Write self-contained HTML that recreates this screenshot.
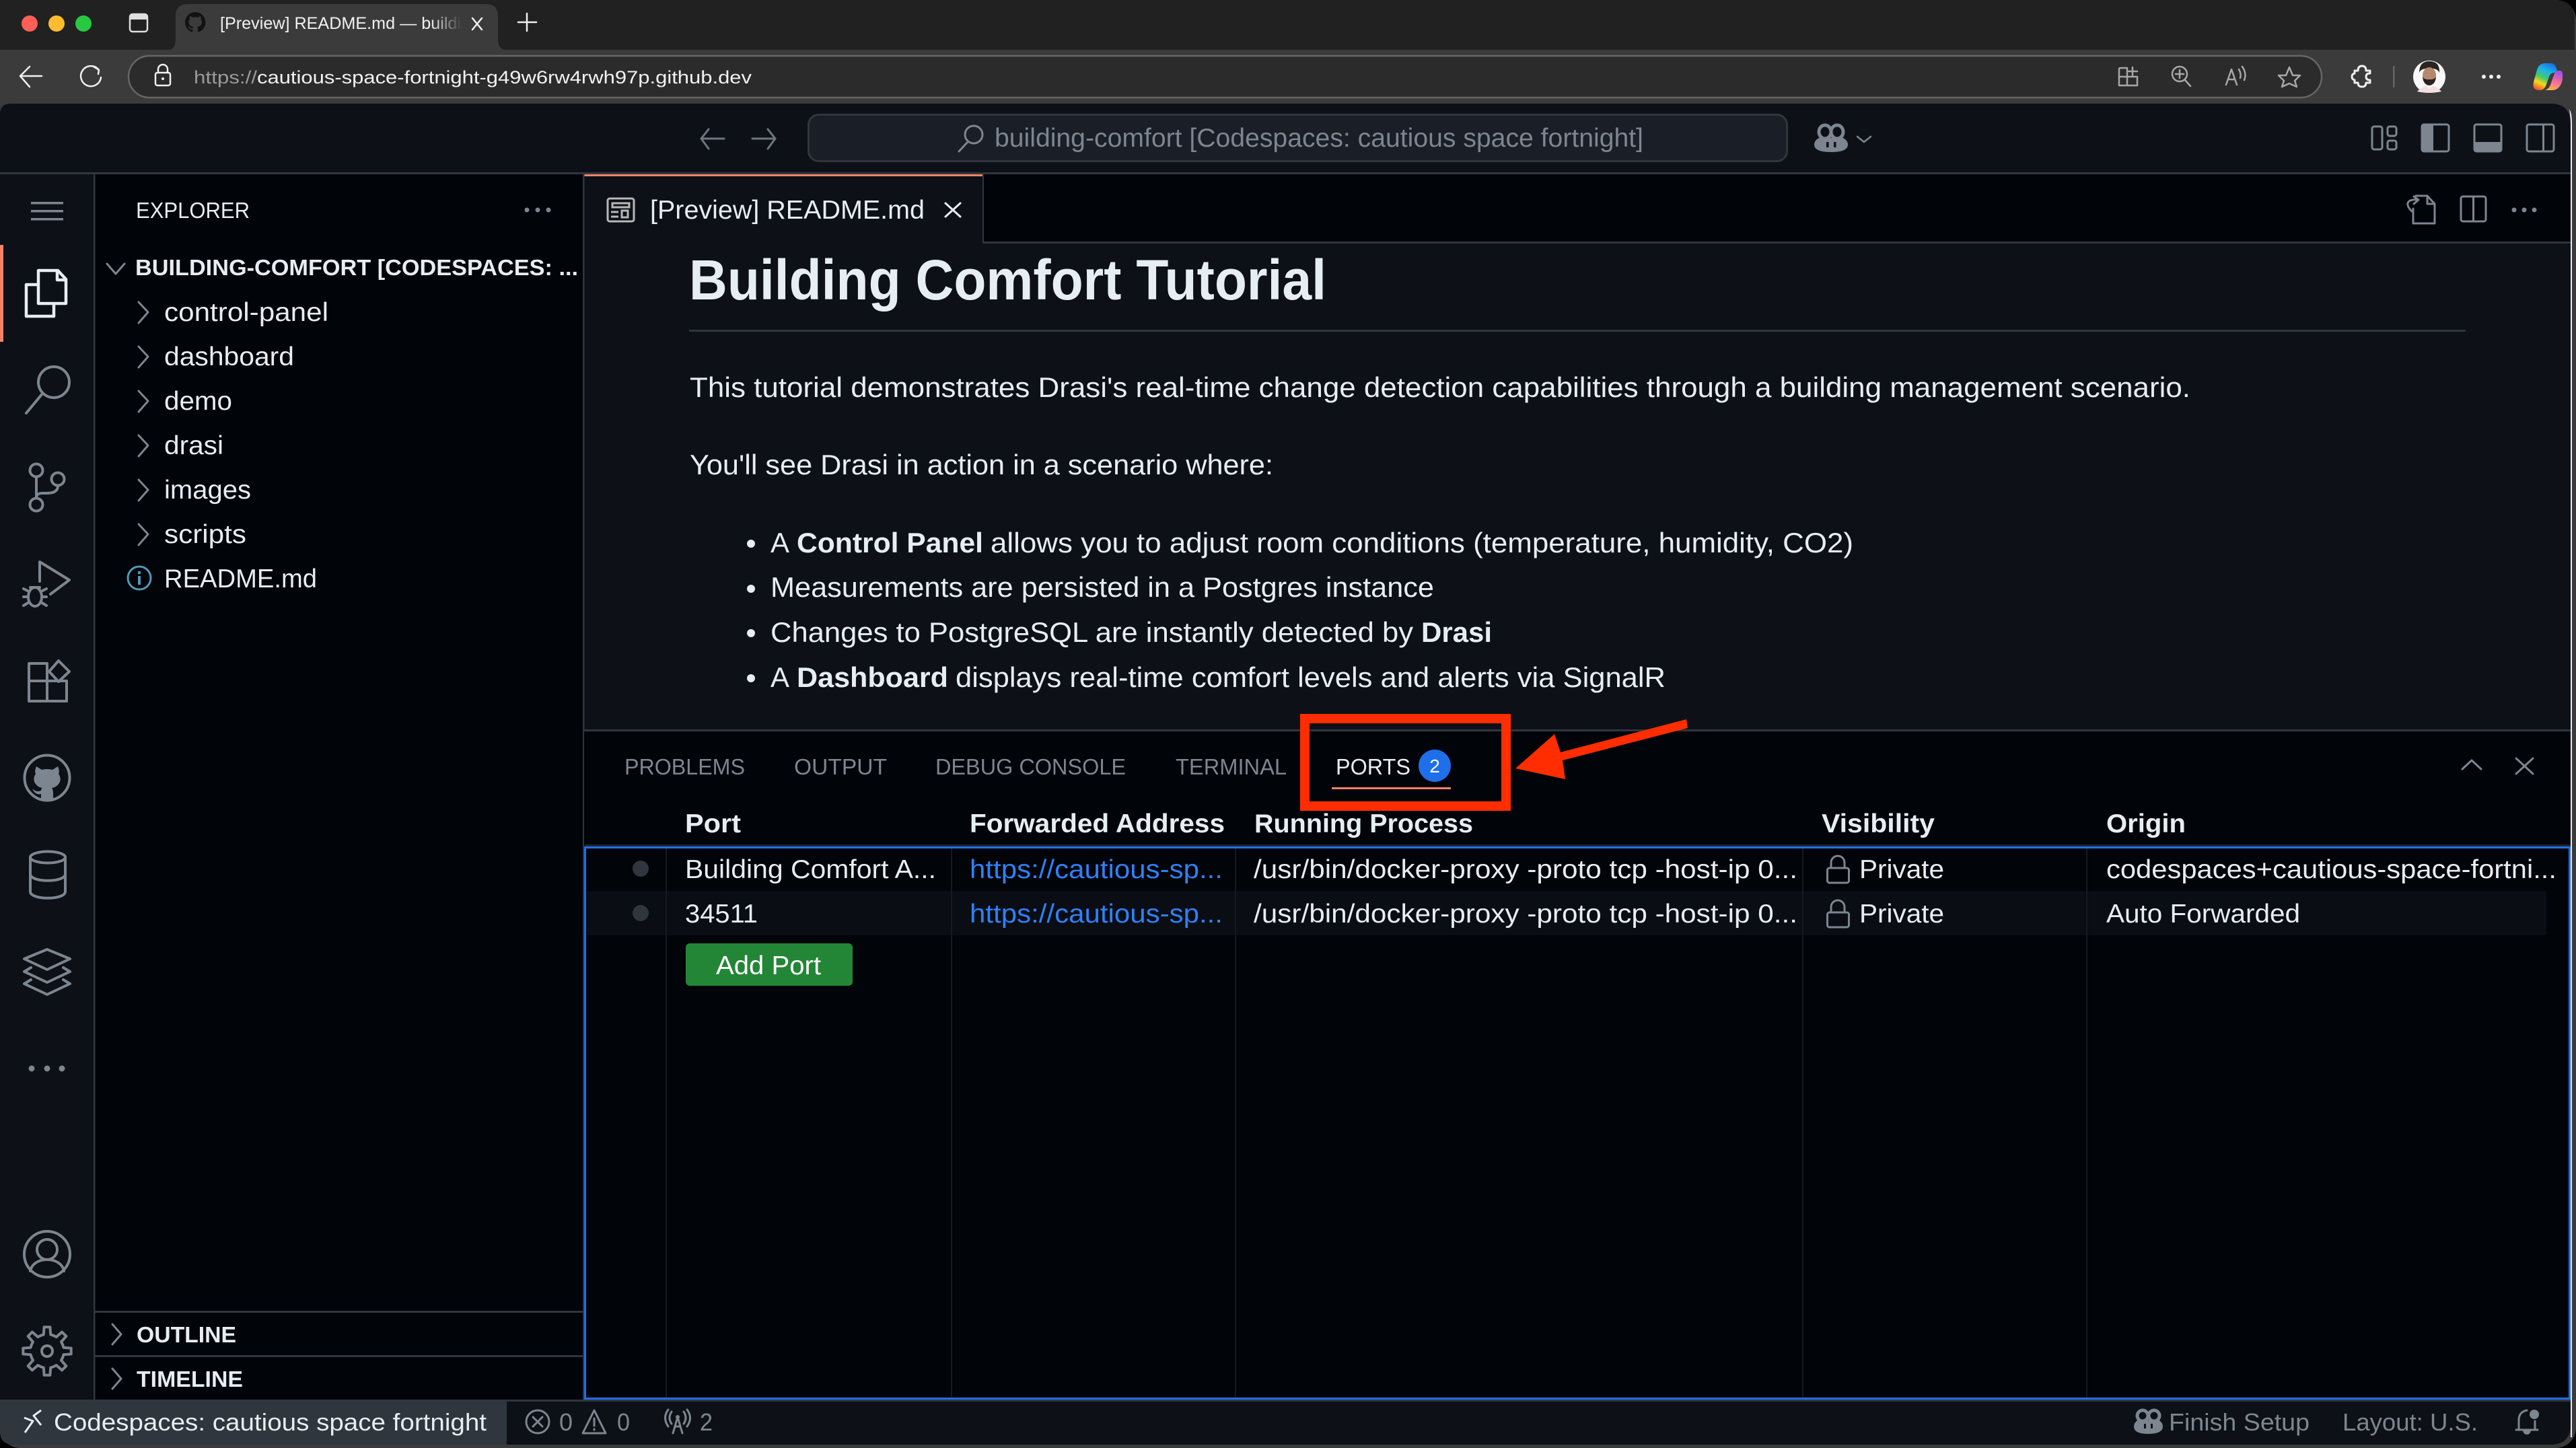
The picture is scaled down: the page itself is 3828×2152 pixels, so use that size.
<!DOCTYPE html>
<html lang="en">
<head>
<meta charset="utf-8">
<title>[Preview] README.md</title>
<style>
html,body{margin:0;padding:0;background:#000;width:3828px;height:2152px;overflow:hidden}
svg{display:block}
text{font-family:"Liberation Sans",sans-serif;white-space:pre}
.b{font-weight:700}
.ic{fill:none;stroke:#7d8590;stroke-width:4;stroke-linejoin:round;stroke-linecap:round}
.sm{fill:none;stroke:#7d8590;stroke-width:3;stroke-linejoin:round;stroke-linecap:round}
.br{fill:none;stroke:#a8a8a8;stroke-width:2.5;stroke-linejoin:round;stroke-linecap:round}
.wh{fill:none;stroke:#f0f0f0;stroke-width:2.5;stroke-linejoin:round;stroke-linecap:round}
</style>
</head>
<body>
<svg xmlns="http://www.w3.org/2000/svg" width="3828" height="2152" viewBox="0 0 3828 2152">
<defs>
<linearGradient id="fade" gradientUnits="userSpaceOnUse" x1="640" y1="0" x2="686" y2="0"><stop offset="0" stop-color="#f0f0f0"/><stop offset="1" stop-color="#f0f0f0" stop-opacity="0"/></linearGradient>
<linearGradient id="cp1" gradientUnits="userSpaceOnUse" x1="3790" y1="94" x2="3772" y2="134"><stop offset="0" stop-color="#1673e6"/><stop offset=".3" stop-color="#1fb5e8"/><stop offset=".55" stop-color="#45c96a"/><stop offset=".75" stop-color="#f4d81e"/><stop offset="1" stop-color="#f4502a"/></linearGradient>
<linearGradient id="cp2" gradientUnits="userSpaceOnUse" x1="3800" y1="105" x2="3790" y2="134"><stop offset="0" stop-color="#a24fe8"/><stop offset=".5" stop-color="#ec6aa4"/><stop offset="1" stop-color="#ffb347"/></linearGradient>
</defs>

<!-- browser chrome -->
<rect x="0" y="0" width="3828" height="2152" rx="30" fill="#3b3b3b"/>
<path d="M0 74V0H3796Q3826 0 3826 30V74Z" fill="#212121"/>
<circle cx="44" cy="35" r="12" fill="#ff5f57"/>
<circle cx="84" cy="35" r="12" fill="#febc2e"/>
<circle cx="124" cy="35" r="12" fill="#28c840"/>
<rect x="193" y="21" width="26" height="26" rx="4" fill="none" stroke="#e0e0e0" stroke-width="2.5"/>
<path d="M193 29V24Q193 21 196 21H216Q219 21 219 24V29Z" fill="#e0e0e0"/>

<path d="M250 74Q261 74 261 58V24Q261 6 279 6H722Q740 6 740 24V58Q740 74 752 74Z" fill="#3b3b3b"/>
<g transform="translate(275,18) scale(1.9)"><path fill="#121212" d="M8 0C3.58 0 0 3.58 0 8c0 3.54 2.29 6.53 5.47 7.59.4.07.55-.17.55-.38 0-.19-.01-.82-.01-1.49-2.01.37-2.53-.49-2.69-.94-.09-.23-.48-.94-.82-1.13-.28-.15-.68-.52-.01-.53.63-.01 1.08.58 1.23.82.72 1.21 1.87.87 2.33.66.07-.52.28-.87.51-1.07-1.78-.2-3.64-.89-3.64-3.95 0-.87.31-1.59.82-2.15-.08-.2-.36-1.02.08-2.12 0 0 .67-.21 2.2.82.64-.18 1.32-.27 2-.27.68 0 1.36.09 2 .27 1.53-1.04 2.2-.82 2.2-.82.44 1.1.16 1.92.08 2.12.51.56.82 1.27.82 2.15 0 3.07-1.87 3.75-3.65 3.95.29.25.54.73.54 1.48 0 1.07-.01 1.93-.01 2.2 0 .21.15.46.55.38A8.013 8.013 0 0016 8c0-4.42-3.58-8-8-8z"/></g>
<text x="327" y="43" font-size="25" fill="url(#fade)" textLength="358" lengthAdjust="spacingAndGlyphs">[Preview] README.md — buildi</text>
<path class="wh" d="M702 27L716 44M716 27L702 44"/>
<path class="wh" d="M783 20V46M770 33H797"/>

<path class="wh" d="M31 113H62M44 99L30 113L44 129"/>
<path class="wh" d="M147 104A15 15 0 1 0 150 115M139 99L147 104L146 110" />
<rect x="191" y="83" width="3259" height="62" rx="31" fill="#2b2b2b" stroke="#666" stroke-width="2.5"/>
<rect x="231" y="108" width="22" height="19" rx="3" fill="none" stroke="#f0f0f0" stroke-width="2.5"/>
<path class="wh" d="M235 108V103A7 7 0 0 1 249 103V108"/>
<circle cx="242" cy="117" r="2" fill="#f0f0f0"/>
<text x="288" y="124" font-size="27" fill="#9a9a9a" textLength="94" lengthAdjust="spacingAndGlyphs">https://</text>
<text x="382" y="124" font-size="27" fill="#f2f2f2" textLength="735" lengthAdjust="spacingAndGlyphs">cautious-space-fortnight-g49w6rw4rwh97p.github.dev</text>

<path class="br" d="M3149 114H3176V127H3149V103Q3149 101 3151 101H3161V127M3161 114V103M3169 100V112M3163 106H3176"/>
<circle cx="3239" cy="110" r="11" class="br"/><path class="br" d="M3247 119L3255 128M3233 110H3245M3239 104V116"/>
<path class="br" d="M3308 126L3316 103L3324 126M3311 118H3321M3327 103Q3331 110 3329 116M3332 99Q3339 109 3335 119"/>
<path class="br" d="M3402 100L3407 112L3418 112L3410 120L3413 129L3402 124L3391 129L3394 120L3386 112L3397 112Z"/>
<path class="wh" style="stroke-width:3" d="M3504 105Q3504 98 3510 98Q3516 98 3516 105H3522V109Q3516 109 3516 114Q3516 119 3522 119V123H3516Q3516 129 3510 129Q3504 129 3504 123H3499V119Q3495 118 3495 114Q3495 110 3499 109V105Z"/>
<rect x="3556" y="98" width="2.5" height="32" fill="#666"/>
<ellipse cx="3610" cy="114" rx="24" ry="24" fill="#f8f8f8"/>
<path d="M3595 108Q3595 91 3610 91Q3626 91 3625 108Q3622 101 3610 102Q3598 101 3595 108Z" fill="#2b2522"/>
<ellipse cx="3610" cy="112" rx="10" ry="12" fill="#b48a6f"/>
<path d="M3600 114Q3601 126 3610 127Q3619 126 3620 114Q3617 119 3610 118Q3603 119 3600 114Z" fill="#2c221d"/>
<path d="M3592 136Q3598 129 3605 128L3610 132L3615 128Q3622 129 3628 136Q3619 138 3610 138Q3601 138 3592 136Z" fill="#f3dfe0"/>
<circle cx="3691" cy="114" r="3" fill="#f0f0f0"/><circle cx="3702" cy="114" r="3" fill="#f0f0f0"/><circle cx="3713" cy="114" r="3" fill="#f0f0f0"/>
<path d="M3771 134Q3763 133 3765 122L3770 104Q3773 94 3782 94H3790Q3797 94 3799 102L3801 108H3796Q3790 108 3788 114L3783 128Q3780 134 3775 134Z" fill="url(#cp1)"/>
<path d="M3782 134Q3788 132 3790 126L3795 112Q3797 105 3803 105H3804Q3808 105 3808 110V118Q3806 128 3800 132Q3797 134 3793 134Z" fill="url(#cp2)"/>

<!-- window -->
<path d="M0 170Q0 154 16 154H3790Q3820 154 3820 184V2117Q3820 2147 3790 2147H20Q0 2147 0 2127Z" fill="#0d1117"/>
<path d="M3820 166Q3822 172 3822 184V2136H3820V184Q3820 176 3818 162Z" fill="#e8e8e8"/>

<!-- title bar -->
<path class="sm" style="stroke:#6e7681" d="M1042 206L1053 192M1042 206L1053 221M1042 206H1076"/>
<path class="sm" style="stroke:#6e7681" d="M1152 206L1141 192M1152 206L1141 221M1152 206H1118"/>
<rect x="1201.5" y="170.5" width="1454" height="69" rx="15" fill="#1a1e26" stroke="#30363d" stroke-width="3"/>
<circle cx="1447" cy="200" r="13" class="sm"/><path class="sm" d="M1438 211L1425 225"/>
<text x="1478" y="218" font-size="39" fill="#7d8590" textLength="964" lengthAdjust="spacingAndGlyphs">building-comfort [Codespaces: cautious space fortnight]</text>
<g fill="none" stroke="#7d8590" stroke-width="5">
<ellipse cx="2712" cy="196" rx="9" ry="10"/><ellipse cx="2730" cy="196" rx="9" ry="10"/>
<path fill="#7d8590" stroke="none" d="M2703 205H2739Q2746 209 2746 215Q2746 226 2721 226Q2696 226 2696 215Q2696 209 2703 205Z"/>
</g>
<rect x="2714" y="211" width="3.5" height="8" fill="#0d1117"/><rect x="2725" y="211" width="3.5" height="8" fill="#0d1117"/>
<path class="sm" d="M2760 203L2770 211L2780 203" style="stroke-width:2.5"/>

<rect x="3525" y="188" width="15" height="34" rx="3" class="sm"/>
<rect x="3548" y="188" width="13" height="14" rx="3" class="sm"/>
<rect x="3548" y="209" width="13" height="13" rx="3" class="sm"/>
<rect x="3599" y="185" width="40" height="40" rx="3" class="sm"/><rect x="3599" y="185" width="17" height="40" rx="2" fill="#7d8590"/>
<rect x="3677" y="185" width="40" height="40" rx="3" class="sm"/><rect x="3677" y="211" width="40" height="15" rx="2" fill="#7d8590"/>
<rect x="3755" y="185" width="40" height="40" rx="3" class="sm"/><rect x="3778" y="185" width="3" height="40" fill="#7d8590"/>
<rect x="0" y="256" width="3820" height="3" fill="#30363d"/>

<!-- activity bar -->
<rect x="139" y="259" width="2.5" height="1821" fill="#30363d"/>
<rect x="46" y="300" width="48" height="3.5" fill="#7d8590"/><rect x="46" y="312" width="48" height="3.5" fill="#7d8590"/><rect x="46" y="324" width="48" height="3.5" fill="#7d8590"/>
<rect x="0" y="364" width="5" height="144" fill="#f78166"/>
<g fill="none" stroke="#e6edf3" stroke-width="4.5" stroke-linejoin="round">
<path d="M57 402H86L98 415V451H57Z"/><path d="M85 402V416H98"/>
<path d="M56 423H39V470H80V453"/>
</g>
<circle cx="80" cy="568" r="23" class="ic"/><path class="ic" d="M63 585L39 614"/>
<circle cx="54" cy="699" r="9.5" class="ic"/><circle cx="54" cy="750" r="9.5" class="ic"/><circle cx="86" cy="712" r="9.5" class="ic"/>
<path class="ic" d="M54 709V740M86 722C86 732 76 733 68 733H62C58 733 54 735 54 740"/>
<path class="ic" d="M59 864V835L103 862L75 883"/>
<ellipse cx="52" cy="887" rx="10" ry="14" class="ic"/><path class="ic" d="M35 875L43 879M35 887H42M35 900L43 895M69 875L61 879M69 887H62M69 900L61 895M45 873H59"/>
<path class="ic" d="M43 986H70V1042H43ZM43 1012H99V1042H70M70 1012V1042"/><path class="ic" d="M99 1012"/>
<path class="ic" d="M73 998L87 982L103 998L87 1013Z"/>
<circle cx="70" cy="1156" r="33.5" class="ic"/>
<path fill="#7d8590" d="M54 1139L62 1144Q70 1142 78 1144L86 1139Q89 1146 87 1150Q91 1156 89 1162Q85 1170 77 1171Q79 1174 79 1178V1190H61V1180Q52 1182 48 1172Q54 1178 61 1175Q61 1172 63 1171Q55 1170 51 1162Q49 1156 53 1150Q51 1146 54 1139Z"/>
<ellipse cx="71" cy="1274" rx="26" ry="8.5" class="ic"/>
<path class="ic" d="M45 1274V1325C45 1338 97 1338 97 1325V1274M45 1299C45 1312 97 1312 97 1299"/>
<path class="ic" d="M70 1411L104 1425L70 1441L36 1425Z"/>
<path class="ic" d="M46 1438L36 1444L70 1460L104 1444L94 1438"/>
<path class="ic" d="M46 1456L36 1462L70 1478L104 1462L94 1456"/>
<circle cx="47" cy="1588" r="4.5" fill="#7d8590"/><circle cx="70" cy="1588" r="4.5" fill="#7d8590"/><circle cx="92" cy="1588" r="4.5" fill="#7d8590"/>
<circle cx="70" cy="1864" r="34" class="ic"/><circle cx="70" cy="1857" r="15" class="ic"/><path class="ic" d="M45 1889C47 1878 58 1872 70 1872C82 1872 93 1878 95 1889"/>
<g transform="translate(70,2008)">
<circle r="8" class="ic"/>
<path class="ic" d="M-9.6 -23.1L-5.2 -24.5L-4.4 -35.7H4.4L5.2 -24.5L9.6 -23.1" transform="rotate(0)"/>
<path class="ic" d="M-9.6 -23.1L-5.2 -24.5L-4.4 -35.7H4.4L5.2 -24.5L9.6 -23.1" transform="rotate(45)"/>
<path class="ic" d="M-9.6 -23.1L-5.2 -24.5L-4.4 -35.7H4.4L5.2 -24.5L9.6 -23.1" transform="rotate(90)"/>
<path class="ic" d="M-9.6 -23.1L-5.2 -24.5L-4.4 -35.7H4.4L5.2 -24.5L9.6 -23.1" transform="rotate(135)"/>
<path class="ic" d="M-9.6 -23.1L-5.2 -24.5L-4.4 -35.7H4.4L5.2 -24.5L9.6 -23.1" transform="rotate(180)"/>
<path class="ic" d="M-9.6 -23.1L-5.2 -24.5L-4.4 -35.7H4.4L5.2 -24.5L9.6 -23.1" transform="rotate(225)"/>
<path class="ic" d="M-9.6 -23.1L-5.2 -24.5L-4.4 -35.7H4.4L5.2 -24.5L9.6 -23.1" transform="rotate(270)"/>
<path class="ic" d="M-9.6 -23.1L-5.2 -24.5L-4.4 -35.7H4.4L5.2 -24.5L9.6 -23.1" transform="rotate(315)"/>
</g>

<!-- sidebar -->
<rect x="141.500" y="259" width="724.5" height="1821" fill="#010409"/>
<rect x="866" y="259" width="2.500" height="1821" fill="#30363d"/>
<text x="202" y="324" font-size="33" fill="#e6edf3" textLength="169" lengthAdjust="spacingAndGlyphs">EXPLORER</text>
<circle cx="783" cy="312" r="3.500" fill="#7d8590"/><circle cx="799" cy="312" r="3.500" fill="#7d8590"/><circle cx="815" cy="312" r="3.500" fill="#7d8590"/>
<path class="sm" d="M159 392L172 407L185 392"/>
<text class="b" x="201" y="409" font-size="33" fill="#e6edf3" textLength="658" lengthAdjust="spacingAndGlyphs">BUILDING-COMFORT [CODESPACES: ...</text>
<path class="sm" d="M206 449L220 464L206 480"/><text x="244" y="477" font-size="39" fill="#e6edf3" textLength="244" lengthAdjust="spacingAndGlyphs">control-panel</text>
<path class="sm" d="M206 515L220 530L206 546"/><text x="244" y="543" font-size="39" fill="#e6edf3" textLength="193" lengthAdjust="spacingAndGlyphs">dashboard</text>
<path class="sm" d="M206 581L220 596L206 612"/><text x="244" y="609" font-size="39" fill="#e6edf3" textLength="101" lengthAdjust="spacingAndGlyphs">demo</text>
<path class="sm" d="M206 647L220 662L206 678"/><text x="244" y="675" font-size="39" fill="#e6edf3" textLength="88" lengthAdjust="spacingAndGlyphs">drasi</text>
<path class="sm" d="M206 713L220 728L206 744"/><text x="244" y="741" font-size="39" fill="#e6edf3" textLength="129" lengthAdjust="spacingAndGlyphs">images</text>
<path class="sm" d="M206 779L220 794L206 810"/><text x="244" y="807" font-size="39" fill="#e6edf3" textLength="122" lengthAdjust="spacingAndGlyphs">scripts</text>
<circle cx="207" cy="859" r="17" fill="none" stroke="#519aba" stroke-width="3"/><rect x="205" y="856" width="4" height="13" fill="#519aba"/><rect x="205" y="849" width="4" height="4" fill="#519aba"/>
<text x="244" y="873" font-size="39" fill="#e6edf3" textLength="227" lengthAdjust="spacingAndGlyphs">README.md</text>
<rect x="141" y="1948" width="725" height="3" fill="#30363d"/>
<rect x="141" y="2014" width="725" height="3" fill="#30363d"/>
<path class="sm" d="M167 1968L180 1983L167 1998"/><text class="b" x="203" y="1995" font-size="33" fill="#e6edf3" textLength="148" lengthAdjust="spacingAndGlyphs">OUTLINE</text>
<path class="sm" d="M167 2034L180 2049L167 2064"/><text class="b" x="203" y="2061" font-size="33" fill="#e6edf3" textLength="158" lengthAdjust="spacingAndGlyphs">TIMELINE</text>

<!-- editor tabs -->
<rect x="868.500" y="259" width="2951.500" height="103" fill="#010409"/>
<rect x="868.500" y="359" width="2951.500" height="3" fill="#30363d"/>
<rect x="868.500" y="259" width="591.500" height="103" fill="#0d1117"/>
<rect x="868.500" y="259" width="591.500" height="3" fill="#f78166"/>
<rect x="1460" y="259" width="2" height="100" fill="#30363d"/>
<g fill="none" stroke="#b8b8b8" stroke-width="3">
<rect x="903" y="295" width="39" height="34" rx="3"/>
<rect x="910" y="302" width="25" height="6"/>
<rect x="924" y="313" width="9" height="10"/>
<path d="M908 315H919M908 322H919"/>
</g>
<text x="966" y="325" font-size="39" fill="#e6edf3" textLength="408" lengthAdjust="spacingAndGlyphs">[Preview] README.md</text>
<path fill="none" stroke="#e6edf3" stroke-width="3" stroke-linecap="round" d="M1405 302L1427 322M1427 302L1405 322"/>
<path class="sm" d="M3590 291H3607L3618 303V332H3586V310M3607 291V303H3618M3584 314Q3574 304 3580 299Q3584 296 3593 297M3587 292L3594 297L3587 303"/>
<rect x="3657" y="292" width="37" height="37" rx="3" class="sm"/><rect x="3674" y="292" width="3" height="37" fill="#7d8590"/>
<circle cx="3736" cy="312" r="3.500" fill="#7d8590"/><circle cx="3751" cy="312" r="3.500" fill="#7d8590"/><circle cx="3766" cy="312" r="3.500" fill="#7d8590"/>

<!-- markdown -->
<text class="b" x="1024" y="445" font-size="84" fill="#e6edf3" textLength="947" lengthAdjust="spacingAndGlyphs">Building Comfort Tutorial</text>
<rect x="1024" y="490" width="2640" height="3" fill="#30363d"/>
<text x="1025" y="590" font-size="42" fill="#e6edf3" textLength="2230" lengthAdjust="spacingAndGlyphs">This tutorial demonstrates Drasi's real-time change detection capabilities through a building management scenario.</text>
<text x="1025" y="705" font-size="42" fill="#e6edf3" textLength="867" lengthAdjust="spacingAndGlyphs">You'll see Drasi in action in a scenario where:</text>
<circle cx="1116" cy="808" r="6" fill="#e6edf3"/><circle cx="1116" cy="875" r="6" fill="#e6edf3"/><circle cx="1116" cy="941" r="6" fill="#e6edf3"/><circle cx="1116" cy="1008" r="6" fill="#e6edf3"/>
<text x="1145" y="821" font-size="42" fill="#e6edf3">A</text>
<text class="b" x="1184" y="821" font-size="42" fill="#e6edf3" textLength="277" lengthAdjust="spacingAndGlyphs">Control Panel</text>
<text x="1472" y="821" font-size="42" fill="#e6edf3" textLength="1282" lengthAdjust="spacingAndGlyphs">allows you to adjust room conditions (temperature, humidity, CO2)</text>
<text x="1145" y="887" font-size="42" fill="#e6edf3" textLength="986" lengthAdjust="spacingAndGlyphs">Measurements are persisted in a Postgres instance</text>
<text x="1145" y="954" font-size="42" fill="#e6edf3" textLength="955" lengthAdjust="spacingAndGlyphs">Changes to PostgreSQL are instantly detected by</text>
<text class="b" x="2112" y="954" font-size="42" fill="#e6edf3" textLength="105" lengthAdjust="spacingAndGlyphs">Drasi</text>
<text x="1145" y="1021" font-size="42" fill="#e6edf3">A</text>
<text class="b" x="1184" y="1021" font-size="42" fill="#e6edf3" textLength="225" lengthAdjust="spacingAndGlyphs">Dashboard</text>
<text x="1420" y="1021" font-size="42" fill="#e6edf3" textLength="1055" lengthAdjust="spacingAndGlyphs">displays real-time comfort levels and alerts via SignalR</text>

<!-- panel -->
<rect x="868" y="1084" width="2952" height="3" fill="#30363d"/>
<rect x="868" y="1087" width="2952" height="993" fill="#010409"/>
<text x="928" y="1151" font-size="33" fill="#7d8590" textLength="179" lengthAdjust="spacingAndGlyphs">PROBLEMS</text>
<text x="1180" y="1151" font-size="33" fill="#7d8590" textLength="138" lengthAdjust="spacingAndGlyphs">OUTPUT</text>
<text x="1390" y="1151" font-size="33" fill="#7d8590" textLength="283" lengthAdjust="spacingAndGlyphs">DEBUG CONSOLE</text>
<text x="1747" y="1151" font-size="33" fill="#7d8590" textLength="165" lengthAdjust="spacingAndGlyphs">TERMINAL</text>
<text x="1985" y="1151" font-size="33" fill="#e6edf3" textLength="111" lengthAdjust="spacingAndGlyphs">PORTS</text>
<circle cx="2132" cy="1138" r="24" fill="#1f6feb"/>
<text x="2132" y="1148" font-size="28" fill="#fff" text-anchor="middle">2</text>
<rect x="1979" y="1170" width="177" height="3" fill="#f78166"/>
<path class="sm" d="M3659 1143L3673 1130L3687 1143"/>
<path class="sm" d="M3739 1127L3764 1150M3764 1127L3739 1150"/>

<rect x="869" y="1255" width="2951" height="3" fill="#21262d"/>
<rect x="869" y="1324" width="2915" height="66" fill="#0a0d13"/>
<g fill="#151a21">
<rect x="989" y="1258" width="2" height="820"/>
<rect x="1413" y="1258" width="2" height="820"/>
<rect x="1835" y="1258" width="2" height="820"/>
<rect x="2678" y="1258" width="2" height="820"/>
<rect x="3100" y="1258" width="2" height="820"/>
</g>
<text class="b" x="1018" y="1237" font-size="39" fill="#e6edf3" textLength="83" lengthAdjust="spacingAndGlyphs">Port</text>
<text class="b" x="1441" y="1237" font-size="39" fill="#e6edf3" textLength="379" lengthAdjust="spacingAndGlyphs">Forwarded Address</text>
<text class="b" x="1864" y="1237" font-size="39" fill="#e6edf3" textLength="325" lengthAdjust="spacingAndGlyphs">Running Process</text>
<text class="b" x="2707" y="1237" font-size="39" fill="#e6edf3" textLength="168" lengthAdjust="spacingAndGlyphs">Visibility</text>
<text class="b" x="3130" y="1237" font-size="39" fill="#e6edf3" textLength="118" lengthAdjust="spacingAndGlyphs">Origin</text>

<circle cx="952" cy="1291" r="12" fill="#30363d"/><circle cx="952" cy="1357" r="12" fill="#30363d"/>
<text x="1018" y="1305" font-size="39" fill="#e6edf3" textLength="373" lengthAdjust="spacingAndGlyphs">Building Comfort A...</text>
<text x="1018" y="1371" font-size="39" fill="#e6edf3" textLength="108" lengthAdjust="spacingAndGlyphs">34511</text>
<text x="1441" y="1305" font-size="39" fill="#2f81f7" textLength="376" lengthAdjust="spacingAndGlyphs">https://cautious-sp...</text>
<text x="1441" y="1371" font-size="39" fill="#2f81f7" textLength="376" lengthAdjust="spacingAndGlyphs">https://cautious-sp...</text>
<text x="1863" y="1305" font-size="39" fill="#e6edf3" textLength="808" lengthAdjust="spacingAndGlyphs">/usr/bin/docker-proxy -proto tcp -host-ip 0...</text>
<text x="1863" y="1371" font-size="39" fill="#e6edf3" textLength="808" lengthAdjust="spacingAndGlyphs">/usr/bin/docker-proxy -proto tcp -host-ip 0...</text>
<g><rect x="2715.500" y="1290" width="32" height="22" rx="3" class="sm"/><path class="sm" d="M2721 1290V1282A10 10 0 0 1 2741 1282V1290"/></g>
<g transform="translate(0,66)"><rect x="2715.500" y="1290" width="32" height="22" rx="3" class="sm"/><path class="sm" d="M2721 1290V1282A10 10 0 0 1 2741 1282V1290"/></g>
<text x="2763" y="1305" font-size="39" fill="#e6edf3" textLength="126" lengthAdjust="spacingAndGlyphs">Private</text>
<text x="2763" y="1371" font-size="39" fill="#e6edf3" textLength="126" lengthAdjust="spacingAndGlyphs">Private</text>
<text x="3130" y="1305" font-size="39" fill="#e6edf3" textLength="669" lengthAdjust="spacingAndGlyphs">codespaces+cautious-space-fortni...</text>
<text x="3130" y="1371" font-size="39" fill="#e6edf3" textLength="288" lengthAdjust="spacingAndGlyphs">Auto Forwarded</text>
<rect x="1019" y="1402" width="248" height="63" rx="6" fill="#238636"/>
<text x="1064" y="1448" font-size="39" fill="#fff" textLength="156" lengthAdjust="spacingAndGlyphs">Add Port</text>

<!-- focus border -->
<rect x="869.500" y="1259.500" width="2949" height="819" fill="none" stroke="#1f6feb" stroke-width="3"/>

<!-- status bar -->
<path d="M0 2080H3820V2117Q3820 2147 3790 2147H20Q0 2147 0 2127Z" fill="#0d1117"/>
<rect x="0" y="2080" width="3820" height="3" fill="#30363d"/>
<path d="M0 2080H753V2147H20Q0 2147 0 2127Z" fill="#30363d"/>
<path fill="none" stroke="#e6edf3" stroke-width="3" stroke-linejoin="round" d="M36 2107L49 2112L37 2129M61 2096L50 2104L61 2118"/>
<text x="80" y="2126" font-size="36" fill="#e6edf3" textLength="643" lengthAdjust="spacingAndGlyphs">Codespaces: cautious space fortnight</text>
<circle cx="799" cy="2113" r="17" class="sm"/><path class="sm" d="M792 2106L806 2120M806 2106L792 2120"/>
<text x="831" y="2126" font-size="36" fill="#7d8590" textLength="20" lengthAdjust="spacingAndGlyphs">0</text>
<path class="sm" d="M883 2096L900 2130H866Z"/><path class="sm" d="M883 2108V2119M883 2124V2125"/>
<text x="917" y="2126" font-size="36" fill="#7d8590" textLength="19" lengthAdjust="spacingAndGlyphs">0</text>
<path class="sm" d="M1000 2130L1007 2106L1014 2130M1003 2120H1011M998 2098Q992 2107 998 2116M1016 2098Q1022 2107 1016 2116M993 2095Q984 2107 993 2120M1021 2095Q1030 2107 1021 2120"/>
<circle cx="1007" cy="2106" r="3" fill="#7d8590"/>
<text x="1040" y="2126" font-size="36" fill="#7d8590" textLength="19" lengthAdjust="spacingAndGlyphs">2</text>
<g fill="none" stroke="#7d8590" stroke-width="5"><ellipse cx="3184" cy="2104" rx="8" ry="8"/><ellipse cx="3201" cy="2104" rx="8" ry="8"/></g>
<path fill="#7d8590" d="M3176 2111H3209Q3214 2115 3214 2120Q3214 2131 3192 2131Q3171 2131 3171 2120Q3171 2115 3176 2111Z"/>
<rect x="3186" y="2116" width="3" height="7" fill="#0d1117"/><rect x="3196" y="2116" width="3" height="7" fill="#0d1117"/>
<text x="3223" y="2126" font-size="36" fill="#7d8590" textLength="209" lengthAdjust="spacingAndGlyphs">Finish Setup</text>
<text x="3481" y="2126" font-size="36" fill="#7d8590" textLength="201" lengthAdjust="spacingAndGlyphs">Layout: U.S.</text>
<path class="sm" d="M3739 2125H3771M3743 2124V2109Q3744 2098 3755 2096M3767 2112V2124"/>
<path fill="#7d8590" d="M3749 2126H3761Q3760 2132 3755 2132Q3750 2132 3749 2126Z"/>
<circle cx="3766" cy="2102" r="7" fill="#7d8590"/>

<!-- annotation -->
<path fill="#ff2d00" fill-rule="evenodd" d="M1932 1061H2245V1205H1932ZM1946 1075V1191H2231V1075Z"/>
<path fill="#ff2d00" d="M2252 1142L2310 1091L2319 1118L2506 1069L2508 1082L2322 1130L2326 1158Z"/>
</svg>
</body>
</html>
